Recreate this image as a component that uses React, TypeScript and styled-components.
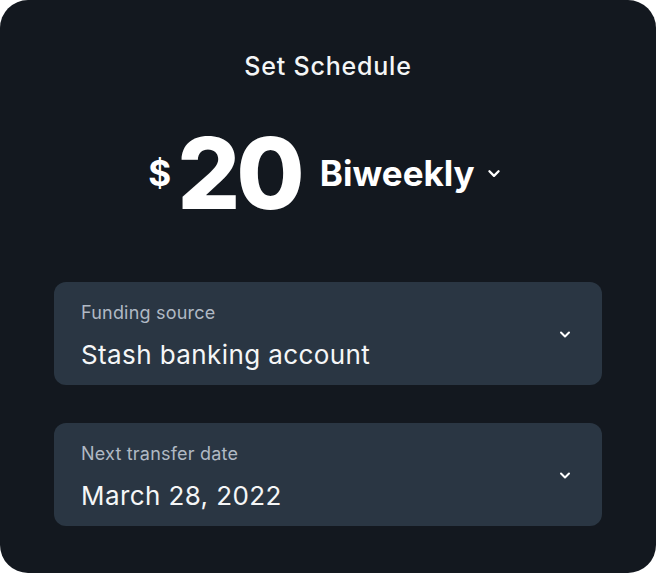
import React from "react";
import styled, { createGlobalStyle } from "styled-components";

const Global = createGlobalStyle`
  html, body { margin: 0; padding: 0; background: #ffffff; }
  body { font-family: Inter, "Noto Sans", sans-serif; }
`;

const Card = styled.div`
  width: 656px;
  height: 573px;
  box-sizing: border-box;
  background: #13181f;
  border-radius: 28px;
  display: flex;
  flex-direction: column;
  align-items: center;
  padding: 50px 54px 0;
  color: #ffffff;
`;

const Title = styled.div`
  font-family: Inter, sans-serif;
  font-weight: 500;
  font-size: 25px;
  line-height: 32px;
  letter-spacing: 0.8px;
  color: #f4f5f6;
`;

const AmountRow = styled.div`
  display: flex;
  align-items: center;
  margin-top: 41px;
  height: 100px;
  margin-left: -6px;
`;

const Currency = styled.span`
  font-family: Inter, sans-serif;
  font-weight: 700;
  font-size: 35px;
  margin-right: 6px;
`;

const Amount = styled.span`
  font-family: Inter, sans-serif;
  font-weight: 800;
  font-size: 99px;
  letter-spacing: -4px;
  line-height: 100px;
`;

const Frequency = styled.button`
  display: flex;
  align-items: center;
  gap: 11px;
  margin-left: 19px;
  background: none;
  border: 0;
  padding: 0;
  color: #ffffff;
  font-family: Inter, sans-serif;
  font-weight: 700;
  font-size: 35px;
`;

const Fields = styled.div`
  align-self: stretch;
  display: flex;
  flex-direction: column;
  gap: 38px;
  margin-top: 59px;
`;

const Field = styled.div`
  height: 103px;
  border-radius: 12px;
  background: #2a3643;
  display: flex;
  align-items: center;
  justify-content: space-between;
  padding: 0 30px 0 27px;
  box-sizing: border-box;
`;

const FieldText = styled.div`
  display: flex;
  flex-direction: column;
  gap: 15px;
  margin-top: 6px;
`;

const Label = styled.div`
  font-family: Inter, sans-serif;
  font-size: 18px;
  color: #b0b9c4;
  line-height: 22px;
  letter-spacing: 0.2px;
`;

const Value = styled.div`
  font-family: Inter, sans-serif;
  font-size: 26px;
  color: #f5f6f7;
  line-height: 32px;
  letter-spacing: 0.4px;
`;

const Chevron = ({ size = 14, stroke = 2 }: { size?: number; stroke?: number }) => (
  <svg width={size} height={size} viewBox="0 0 14 14" fill="none">
    <path d="M3 5.5 L7 9.5 L11 5.5" stroke="#ffffff" strokeWidth={stroke} strokeLinecap="round" strokeLinejoin="round" />
  </svg>
);

const SelectField = ({ label, value }: { label: string; value: string }) => (
  <Field>
    <FieldText>
      <Label>{label}</Label>
      <Value>{value}</Value>
    </FieldText>
    <Chevron size={14} stroke={2} />
  </Field>
);

export default function App() {
  return (
    <>
      <Global />
      <Card>
        <Title>Set Schedule</Title>
        <AmountRow>
          <Currency>$</Currency>
          <Amount>20</Amount>
          <Frequency>
            Biweekly
            <Chevron size={16} stroke={2} />
          </Frequency>
        </AmountRow>
        <Fields>
          <SelectField label="Funding source" value="Stash banking account" />
          <SelectField label="Next transfer date" value="March 28, 2022" />
        </Fields>
      </Card>
    </>
  );
}
